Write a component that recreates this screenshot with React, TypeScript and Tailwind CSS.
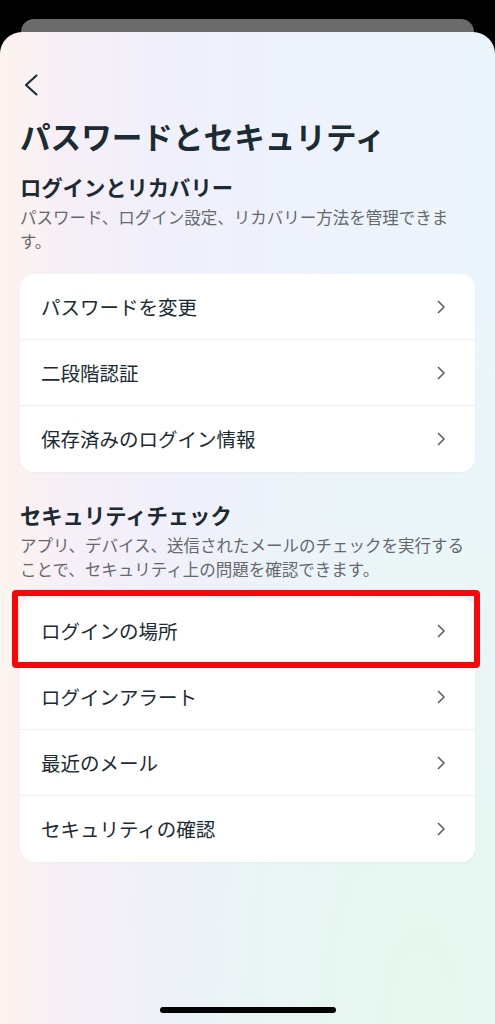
import React from "react";

const LOGIN_ITEMS = ["パスワードを変更", "二段階認証", "保存済みのログイン情報"];
const CHECK_ITEMS = ["ログインの場所", "ログインアラート", "最近のメール", "セキュリティの確認"];

function ChevronRight() {
  return (
    <svg width="16" height="16" viewBox="0 0 16 16" fill="none" className="shrink-0">
      <path d="M5.5 2.5 L11 8 L5.5 13.5" stroke="#5b646d" strokeWidth="1.7" strokeLinecap="round" strokeLinejoin="round" />
    </svg>
  );
}

function Row({ label, last }: { label: string; last?: boolean }) {
  return (
    <div
      className={
        "flex h-[66px] items-center justify-between pl-[21px] pr-[26px] " +
        (last ? "" : "border-b border-[#eceef1]")
      }
    >
      <span className="text-[19.5px] leading-none text-[#1c2b33]">{label}</span>
      <ChevronRight />
    </div>
  );
}

export default function App() {
  return (
    <div className="h-[1024px] w-[495px] overflow-hidden bg-black font-['Noto_Sans_CJK_JP','Noto_Sans',sans-serif]">
      <div className="h-[19px]" />
      <div className="mx-[21px] h-[13px] rounded-t-[16px] bg-[#6b6b6b]" />

      <div className="relative flex h-[992px] flex-col rounded-t-[22px] bg-[linear-gradient(to_right,#fdf3ee_0%,#f6eff7_14%,#eff0fb_38%,#edf3fc_70%,#edf5fc_100%)]">
        <div className="pointer-events-none absolute inset-0 rounded-t-[22px] bg-[radial-gradient(ellipse_at_85%_100%,rgba(230,248,238,0.95)_0%,rgba(230,248,238,0)_55%)]" />

        <div className="relative flex flex-col px-5">
          <div className="mt-[41px] h-[24px]">
            <svg width="18" height="24" viewBox="0 0 18 24" fill="none" className="ml-[2px]">
              <path d="M14.5 2.5 L4 12 L14.5 21.5" stroke="#1c2b33" strokeWidth="2.1" strokeLinecap="round" strokeLinejoin="round" />
            </svg>
          </div>

          <h1 className="mt-[19px] text-[30.6px] font-bold leading-[40px] text-[#1c2b33]">
            パスワードとセキュリティ
          </h1>

          <h2 className="mt-[17px] text-[21.3px] font-bold leading-[28px] text-[#1c2b33]">
            ログインとリカバリー
          </h2>
          <p className="mt-1 text-[16.5px] leading-[24px] text-[#65686d]">
            パスワード、ログイン設定、リカバリー方法を管理できます。
          </p>

          <div className="mt-[21px] overflow-hidden rounded-[14px] bg-white shadow-[0_1px_3px_rgba(0,0,0,0.03)]">
            {LOGIN_ITEMS.map((item, i) => (
              <Row key={item} label={item} last={i === LOGIN_ITEMS.length - 1} />
            ))}
          </div>

          <h2 className="mt-[29px] text-[21.3px] font-bold leading-[28px] text-[#1c2b33]">
            セキュリティチェック
          </h2>
          <p className="mt-1 text-[16.5px] leading-[24px] text-[#65686d]">
            アプリ、デバイス、送信されたメールのチェックを実行することで、セキュリティ上の問題を確認できます。
          </p>

          <div className="relative mt-[17px]">
            <div className="overflow-hidden rounded-[14px] bg-white shadow-[0_1px_3px_rgba(0,0,0,0.03)]">
              {CHECK_ITEMS.map((item, i) => (
                <Row key={item} label={item} last={i === CHECK_ITEMS.length - 1} />
              ))}
            </div>
            {/* red highlight annotation */}
            <div className="absolute -left-[8px] -right-[5px] -top-[8px] h-[78px] rounded-[4px] border-[6px] border-[#f20a0a]" />
          </div>
        </div>

        <div className="relative mx-auto mb-[11px] mt-auto h-[6px] w-[176px] rounded-full bg-black" />
      </div>
    </div>
  );
}
